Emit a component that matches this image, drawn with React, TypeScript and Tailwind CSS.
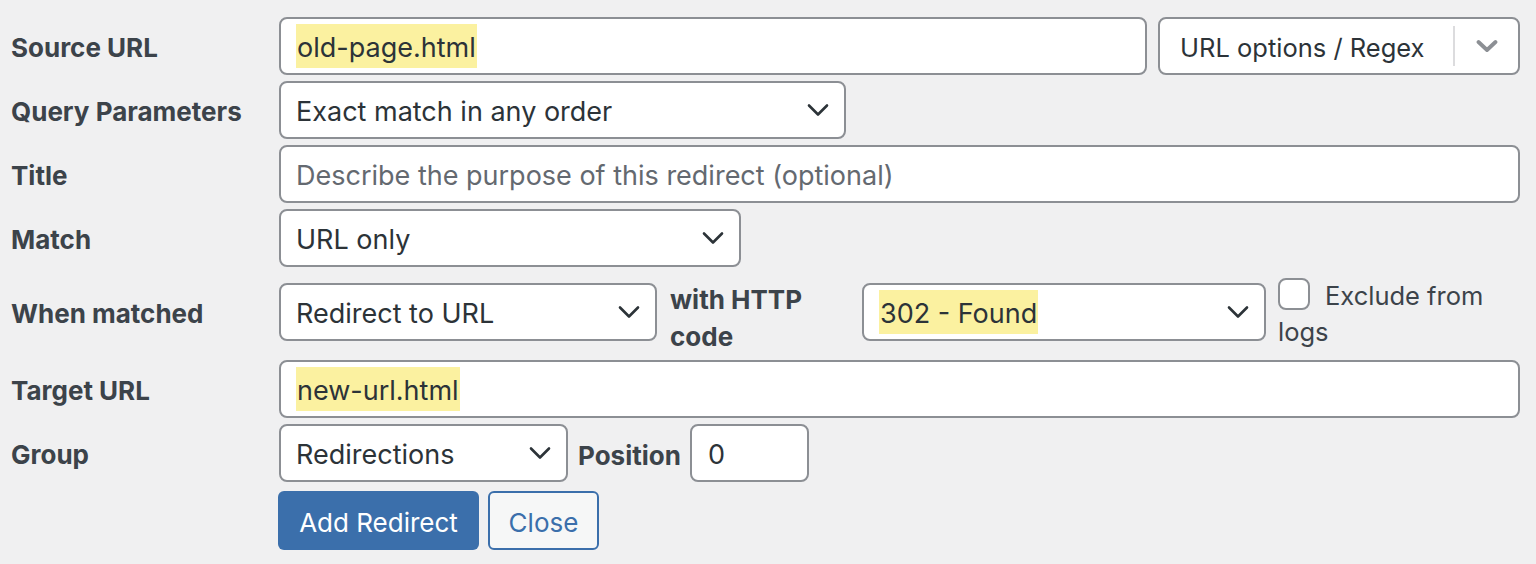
import type { ReactNode } from "react";

const font = { fontFamily: "Inter, 'Noto Sans', sans-serif" };

function Chevron({ className = "", bold = false }: { className?: string; bold?: boolean }) {
  return (
    <svg className={className} width="22" height="14" viewBox="0 0 22 14" fill="none">
      <path
        d={bold ? "M2.5 3l8.5 8 8.5-8" : "M2 2.5l9 9 9-9"}
        stroke="currentColor"
        strokeWidth={bold ? 3.8 : 2.6}
        strokeLinecap="round"
        strokeLinejoin="round"
      />
    </svg>
  );
}

function Row({ label, children, className = "" }: { label: string; children: ReactNode; className?: string }) {
  return (
    <div className={`flex items-center ${className}`}>
      <div className="w-[279px] shrink-0 pl-[11px] pt-[3px] text-[26px] font-bold text-[#3c434a]">{label}</div>
      <div className="flex flex-1 items-center min-w-0">{children}</div>
    </div>
  );
}

function Select({ value, width, highlight = false }: { value: string; width: string; highlight?: boolean }) {
  return (
    <div
      className={`${width} h-[58px] shrink-0 flex items-center justify-between rounded-[8px] border-2 border-[#8c8f94] bg-white pl-[15px] pr-[15px] text-[27px] text-[#2c3338]`}
    >
      <span className={`pt-[4px] ${highlight ? "bg-[#fbf1a0] px-[1px]" : ""}`}>{value}</span>
      <Chevron className="text-[#2c3338]" />
    </div>
  );
}

function TextInput({ value, placeholder, width = "flex-1", highlight = false }: { value?: string; placeholder?: string; width?: string; highlight?: boolean }) {
  return (
    <div className={`${width} h-[58px] flex items-center rounded-[8px] border-2 border-[#8c8f94] bg-white pl-[15px] text-[27px]`}>
      {value ? (
        <span className={`pt-[4px] text-[#2c3338] ${highlight ? "bg-[#fbf1a0] px-[1px]" : ""}`}>{value}</span>
      ) : (
        <span className="pt-[4px] text-[#646970]">{placeholder}</span>
      )}
    </div>
  );
}

export default function App() {
  return (
    <div className="min-h-[564px] w-full bg-[#f0f0f1] pt-[17px] pr-[16px]" style={font}>
      <Row label="Source URL">
        <TextInput value="old-page.html" highlight />
        <div className="ml-[11px] w-[362px] h-[58px] shrink-0 flex items-center rounded-[8px] border-2 border-[#8c8f94] bg-white">
          <span className="pl-[20px] pt-[4px] flex-1 text-[25.5px] text-[#2c3338]">URL options / Regex</span>
          <span className="w-[2px] h-[40px] bg-[#dcdcde]" />
          <span className="w-[63px] flex justify-center">
            <Chevron className="text-[#8c8f94]" bold />
          </span>
        </div>
      </Row>

      <Row label="Query Parameters" className="mt-[6px]">
        <Select value="Exact match in any order" width="w-[567px]" />
      </Row>

      <Row label="Title" className="mt-[6px]">
        <TextInput placeholder="Describe the purpose of this redirect (optional)" />
      </Row>

      <Row label="Match" className="mt-[6px]">
        <Select value="URL only" width="w-[462px]" />
      </Row>

      <Row label="When matched" className="mt-[12px] h-[66px]">
        <Select value="Redirect to URL" width="w-[378px]" />
        <div className="ml-[13px] w-[150px] pt-[12px] text-[26px] font-bold leading-[37px] text-[#3c434a]">with HTTP code</div>
        <div className="ml-[54px]">
          <Select value="302 - Found" width="w-[404px]" highlight />
        </div>
        <div className="ml-[12px] pt-[4px] text-[25.5px] leading-[36px] text-[#3c434a]">
          <span className="inline-block align-top w-[32px] h-[32px] rounded-[8px] border-2 border-[#8c8f94] bg-white mr-[15px]" />
          Exclude from logs
        </div>
      </Row>

      <Row label="Target URL" className="mt-[15px]">
        <TextInput value="new-url.html" highlight />
      </Row>

      <Row label="Group" className="mt-[6px]">
        <Select value="Redirections" width="w-[289px]" />
        <div className="ml-[10px] pt-[4px] text-[26px] font-bold text-[#3c434a]">Position</div>
        <div className="ml-[9px] w-[119px] h-[58px] flex items-center rounded-[8px] border-2 border-[#8c8f94] bg-white pl-[16px] pt-[4px] text-[27px] text-[#2c3338]">
          0
        </div>
      </Row>

      <div className="mt-[9px] flex pl-[278px] gap-[9px]">
        <button className="h-[59px] w-[201px] rounded-[6px] bg-[#3b6fab] pt-[3px] text-[26px] text-white">Add Redirect</button>
        <button className="h-[59px] w-[111px] rounded-[6px] border-2 border-[#3b6fab] bg-[#f6f7f7] pt-[3px] text-[26px] text-[#3b6fab]">Close</button>
      </div>
    </div>
  );
}
